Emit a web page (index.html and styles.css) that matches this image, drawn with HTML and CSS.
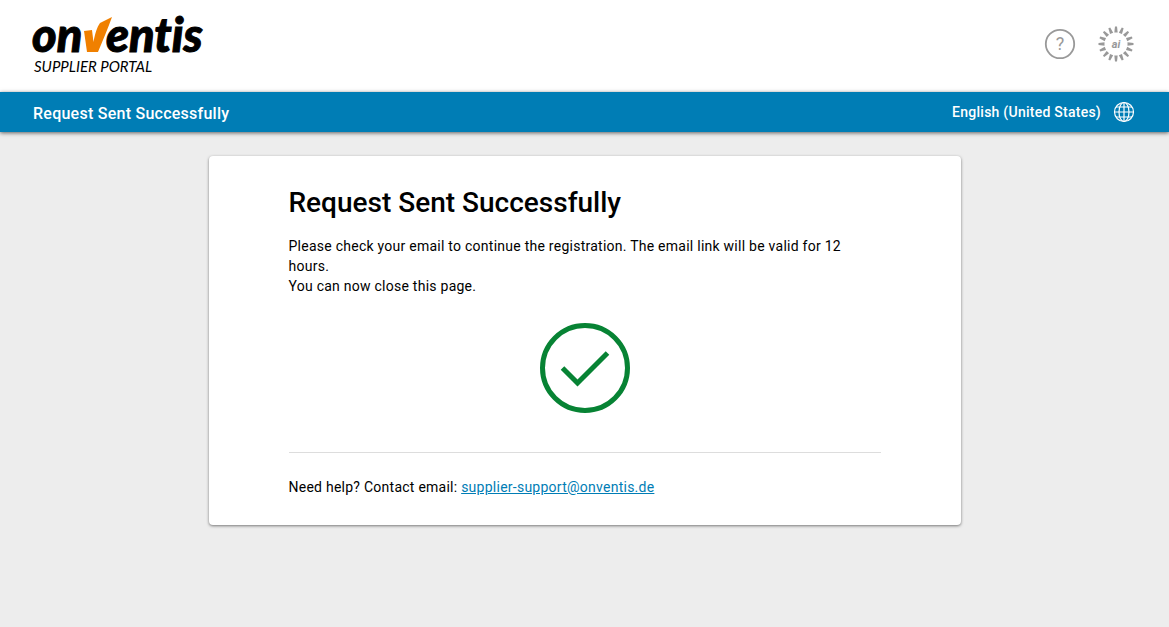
FILE: index.html
```html
<!DOCTYPE html>
<html lang="en">
<head>
    <meta charset="UTF-8">
    <meta name="viewport" content="width=device-width, initial-scale=1.0">
    <title>Request Sent Successfully</title>
    <link rel="stylesheet" href="styles.css">
</head>
<body>
    <header class="header">
        <a class="logo" href="#" aria-label="Onventis Supplier Portal">
            <svg width="180" height="62" viewBox="0 0 180 62">
                <text class="logo-name" x="0" y="39">on</text>
                <path fill="#f08000" d="M52 18 L60 17 L61.500 29 C63 21 65 14 68 10 C72 8 76 6 80 4 C76 15 71 27 66 39 L55 39 Z"/>
                <text class="logo-name" x="74" y="39">entis</text>
                <text class="logo-sub" x="2" y="59">SUPPLIER PORTAL</text>
            </svg>
        </a>
        <div class="header-actions">
            <button class="icon-button" type="button" aria-label="Help">
                <svg width="32" height="32" viewBox="0 0 32 32">
                    <circle cx="16" cy="16" r="14.200" fill="none" stroke="#999" stroke-width="1.800"/>
                    <text class="help-mark" x="16" y="22" text-anchor="middle">?</text>
                </svg>
            </button>
            <button class="icon-button" type="button" aria-label="AI assistant">
                <svg id="ai-icon" width="36" height="36" viewBox="0 0 36 36">
                    <defs><path id="ray" d="M17 0.500 L19 0.500 L19.700 6.500 L16.300 6.500 Z" fill="#999"/></defs>
                    <text class="ai-mark" x="18" y="22" text-anchor="middle">ai</text>
                </svg>
            </button>
        </div>
    </header>

    <div class="title-bar">
        <span class="page-title">Request Sent Successfully</span>
        <button class="language" type="button">
            English (United States)
            <svg width="22" height="22" viewBox="0 0 22 22" fill="none" stroke="#fff" stroke-width="1.2">
                <circle cx="11" cy="11" r="9.5"/>
                <ellipse cx="11" cy="11" rx="5" ry="9.5"/>
                <path d="M11 1.5 V20.5 M1.5 11 H20.5 M3 6 H19 M3 16 H19"/>
            </svg>
        </button>
    </div>

    <main class="card">
        <h1>Request Sent Successfully</h1>
        <p>
            Please check your email to continue the registration. The email link will be valid for 12 hours.<br>
            You can now close this page.
        </p>
        <svg class="success-icon" width="90" height="90" viewBox="0 0 90 90" fill="none" stroke="#078334" stroke-width="5">
            <circle cx="45" cy="45" r="42.5"/>
            <path d="M22.500 45 L37.500 60 L67.500 30"/>
        </svg>
        <hr>
        <p class="help">Need help? Contact email: <a href="mailto:supplier-support@onventis.de">supplier-support@onventis.de</a></p>
    </main>

    <script>
        const icon = document.getElementById('ai-icon');
        for (let i = 0; i < 16; i++) {
            const ray = document.createElementNS('http://www.w3.org/2000/svg', 'use');
            ray.setAttribute('href', '#ray');
            ray.setAttribute('transform', `rotate(${i * 22.5} 18 18)`);
            icon.appendChild(ray);
        }
    </script>
</body>
</html>
```
FILE: styles.css
```css
* {
    box-sizing: border-box;
}

body {
    margin: 0;
    font-family: Roboto, Arial, sans-serif;
    font-size: 14px;
    line-height: 20px;
    letter-spacing: 0.018em;
    color: #000;
    background: #ededed;
}

button {
    padding: 0;
    border: none;
    background: none;
    font: inherit;
    letter-spacing: inherit;
    color: inherit;
    cursor: pointer;
}

svg {
    display: block;
}

.header {
    display: flex;
    justify-content: space-between;
    align-items: center;
    padding: 13px 35px 17px 32px;
    background: #fff;
}

.logo {
    color: #000;
}

.logo svg {
    overflow: visible;
}

.logo-name {
    font: italic 900 47px Lato, sans-serif;
    font-variant-ligatures: none;
    letter-spacing: 0;
    stroke: #000;
    stroke-width: 1px;
}

.logo-sub {
    font: italic 400 15px Lato, sans-serif;
    letter-spacing: 0;
}

.header-actions {
    display: flex;
    align-items: center;
    gap: 22px;
}

.help-mark {
    font-size: 18px;
    letter-spacing: 0;
    fill: #999;
}

.ai-mark {
    font: italic 700 11px Roboto, sans-serif;
    letter-spacing: 0;
    fill: #999;
}

.title-bar {
    display: flex;
    justify-content: space-between;
    align-items: center;
    height: 40px;
    padding: 0 34px 0 33px;
    color: #fff;
    background: #007db5;
    box-shadow: 0 1px 4px rgba(0, 0, 0, 0.6);
}

.page-title {
    padding-top: 3px;
    font-size: 16px;
    font-weight: 500;
}

.language {
    display: flex;
    align-items: center;
    gap: 12px;
    font-weight: 500;
}

.card {
    max-width: 752px;
    margin: 24px auto;
    padding: 31px 80px 28px;
    background: #fff;
    border-radius: 4px;
    box-shadow: 0 1px 3px rgba(0, 0, 0, 0.5);
}

h1 {
    margin: 0 0 17px;
    font-size: 28px;
    line-height: 32px;
    font-weight: 500;
    letter-spacing: 0;
}

p {
    margin: 0;
}

.success-icon {
    margin: 27px auto 39px;
}

hr {
    margin: 0 0 24px;
    border: none;
    border-top: 1px solid #ddd;
}

a {
    color: #007db5;
}
```
